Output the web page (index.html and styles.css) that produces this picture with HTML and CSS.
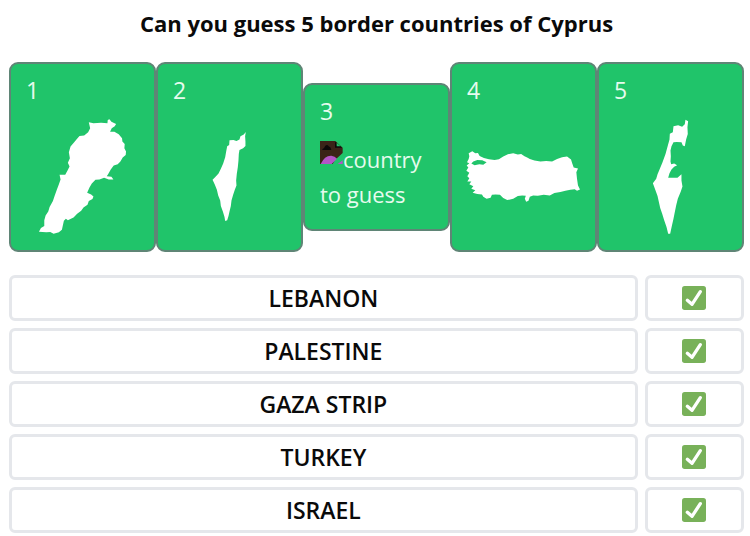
FILE: index.html
```
<!DOCTYPE html>
<html lang="en">
<head>
    <meta charset="UTF-8">
    <title>Border countries</title>
    <link rel="stylesheet" href="styles.css">
</head>
<body>
    <div class="container">
        <h1>Can you guess 5 border countries of Cyprus</h1>

        <div class="cards">
            <div class="card">
                <p class="number">1</p>
                <svg class="map" viewBox="79 203 340 340" aria-label="country to guess">
                    <path d="M268 210L282 213 305 211 324 213 325 203 330 201 336 208 350 215 346 222 337 228 332 238 345 238 358 246 368 258 369 268 376 275 375 288 380 298 379 308 370 316 363 328 355 336 343 340 334 352 326 366 322 372 336 374 342 382 328 382 314 377 300 382 288 383 277 394 270 406 263 422 275 427 282 433 279 441 268 447 264 458 252 466 245 476 233 485 222 496 205 505 199 500 193 506 190 520 187 533 178 541 162 545 152 540 140 541 118 539 124 528 134 522 134 505 138 490 146 478 150 465 160 447 165 432 172 412 178 396 183 382 180 368 197 368 204 355 210 343 205 332 211 318 208 300 213 283 224 270 232 260 240 251 254 250 266 240 272 228z"/>
                </svg>
            </div>
            <div class="card">
                <p class="number">2</p>
                <svg class="map" viewBox="55 203 340 340" aria-label="country to guess">
                    <path d="M274 239L272 252 273 268 273 281 266 288 255 293 253 305 252 325 250 345 247 365 245 385 246 400 241 413 236 428 231 445 229 462 225 478 222 492 218 505 212 507 210 495 205 478 199 462 197 445 191 430 187 413 181 398 174 383 183 374 192 364 199 350 206 334 212 315 215 298 218 282 224 278 225 264 237 263 246 266 255 262 258 252 268 247z"/>
                </svg>
            </div>
            <div class="card">
                <p class="number">3</p>
                <p class="guess"><svg class="broken" viewBox="0 0 69 69" aria-hidden="true">
                    <path fill="#3b2418" d="M0 0H46L68 20V36L45 57L38 69H0z"/>
                    <path fill="#0d0808" d="M7 25Q13 21 16 14Q22 9 26 16Q33 18 34 27H7zM45 3V20H66L61 15L50 13V5z"/>
                    <path fill="#20c46a" d="M50 5L62 16H50z"/>
                    <path fill="#b455c8" d="M2 69Q14 43 34 44Q45 45 51 53L35 69zM53 69L68 58V69z"/>
                </svg>country to guess</p>
            </div>
            <div class="card">
                <p class="number">4</p>
                <svg class="map" viewBox="59 203 340 340" aria-label="country to guess">
                    <path fill-rule="evenodd" d="M64 303L75 297 84 303 92 302 97 311 110 317 125 321 142 323 155 321 168 313 182 306 198 303 212 307 222 305 232 312 240 316 248 320 262 325 280 328 297 326 315 328 330 320 345 315 360 313 372 322 376 335 380 346 393 349 388 360 390 380 393 400 399 412 390 416 383 411 370 413 355 416 340 420 322 423 308 430 290 428 272 431 258 430 248 434 244 446 237 449 233 440 236 431 225 430 212 432 198 440 180 444 168 438 158 428 145 427 134 428 130 437 118 440 108 434 104 427 90 426 76 422 84 414 72 410 78 402 66 396 72 388 60 388 66 378 60 372 66 362 57 356 63 346 58 340 66 333 59 330 64 320 66 312zM78 328L90 323 105 324 118 330 108 338 96 336 82 339 72 334z"/>
                </svg>
            </div>
            <div class="card">
                <p class="number">5</p>
                <svg class="map" viewBox="59 203 340 340" aria-label="country to guess">
                    <path d="M274 202L282 207 280 225 281 245 276 262 272 282 266 280 262 270 248 269 238 270 232 282 229 295 230 312 229 328 231 336 240 334 249 339 240 344 232 352 226 363 222 377 236 377 250 377 262 366 262 385 265 403 260 418 251 440 246 460 242 480 238 500 233 522 228 545 222 545 217 525 210 505 204 485 198 468 194 450 190 432 184 415 176 393 186 380 190 366 196 352 205 330 214 305 221 280 226 262 227 244 236 240 238 222 252 219 264 223 272 216z"/>
                </svg>
            </div>
        </div>

        <div class="answers">
            <div class="answer">LEBANON</div>
            <div class="answer"><svg class="check" viewBox="0 0 72 72" role="img" aria-label="correct"><rect width="72" height="72" rx="8"/><path d="M16 43L30 55L55 17"/></svg></div>
            <div class="answer">PALESTINE</div>
            <div class="answer"><svg class="check" viewBox="0 0 72 72" role="img" aria-label="correct"><rect width="72" height="72" rx="8"/><path d="M16 43L30 55L55 17"/></svg></div>
            <div class="answer">GAZA STRIP</div>
            <div class="answer"><svg class="check" viewBox="0 0 72 72" role="img" aria-label="correct"><rect width="72" height="72" rx="8"/><path d="M16 43L30 55L55 17"/></svg></div>
            <div class="answer">TURKEY</div>
            <div class="answer"><svg class="check" viewBox="0 0 72 72" role="img" aria-label="correct"><rect width="72" height="72" rx="8"/><path d="M16 43L30 55L55 17"/></svg></div>
            <div class="answer">ISRAEL</div>
            <div class="answer"><svg class="check" viewBox="0 0 72 72" role="img" aria-label="correct"><rect width="72" height="72" rx="8"/><path d="M16 43L30 55L55 17"/></svg></div>
        </div>
    </div>
</body>
</html>
```

FILE: styles.css
```
* {
    box-sizing: border-box;
}

body {
    font-family: "Open Sans", "Noto Sans", sans-serif;
    margin: 0;
    background-color: #ffffff;
    color: #0a0a0a;
}

.container {
    padding: 5px 6px 0 9px;
}

h1 {
    margin: 0 0 21px;
    text-align: center;
    font-size: 22px;
    line-height: 36px;
    font-weight: 700;
}

.cards {
    display: grid;
    grid-template-columns: repeat(5, 1fr);
    align-items: center;
}

.card {
    padding: 9px 15px 17px;
    background-color: #20c46a;
    border: 2px solid #5f8576;
    border-radius: 9px;
    color: #e6fbee;
    font-size: 22px;
    line-height: 35px;
}

.number {
    margin: 0 0 12px;
    font-size: 23px;
}

.guess {
    margin: 0;
}

.map {
    display: block;
    width: 100%;
    fill: #ffffff;
    overflow: visible;
}

.broken {
    width: 23px;
    height: 23px;
    vertical-align: 4px;
}

.answers {
    display: grid;
    grid-template-columns: 19fr 3fr;
    gap: 7px;
    margin-top: 23px;
}

.answer {
    display: flex;
    align-items: center;
    justify-content: center;
    border: 3px solid #e5e7eb;
    border-radius: 6px;
    font-size: 23px;
    line-height: 40px;
    font-weight: 600;
}

.check {
    width: 24px;
    height: 24px;
    fill: #78b159;
}

.check path {
    fill: none;
    stroke: #ffffff;
    stroke-width: 10;
    stroke-linecap: round;
    stroke-linejoin: round;
}
```
